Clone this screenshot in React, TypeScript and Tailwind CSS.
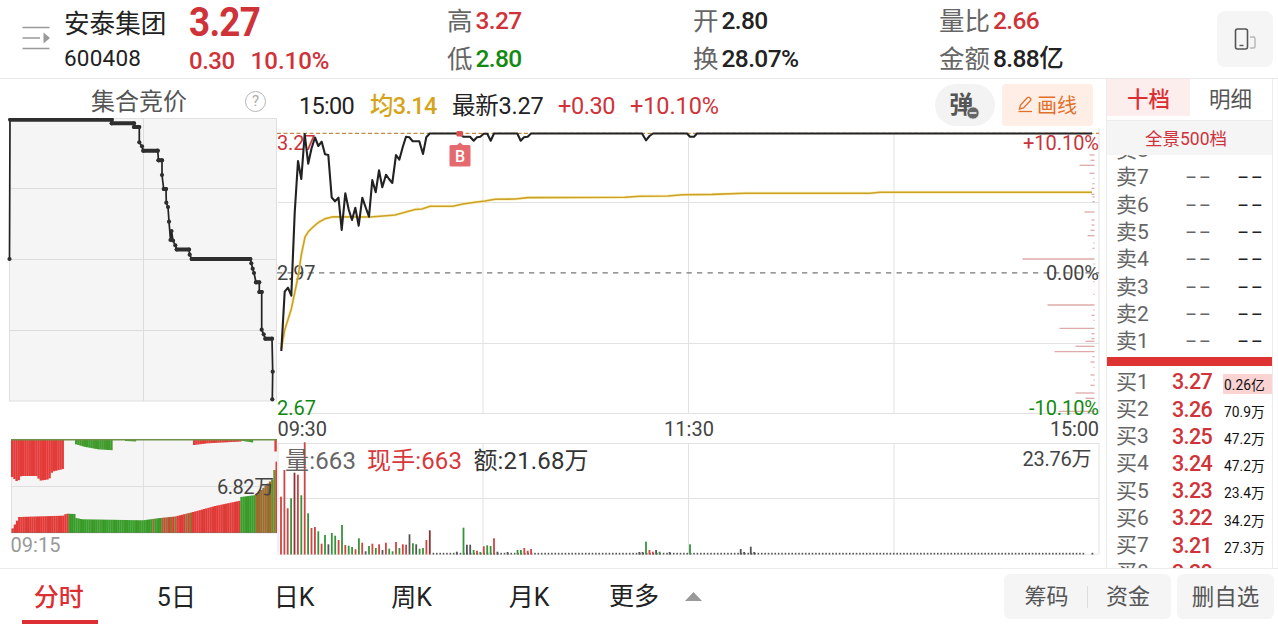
import React from 'react';
import clsx from 'clsx';

type Point = [number, number];

const GRID = '#e2e2e2';
const RED = '#e83a3a';
const GREEN = '#36a12b';

const toPath = (points: Point[]) => points.map((p) => p.join(',')).join(' ');

const interpolate = (points: Point[], x: number) => {
    for (let i = 1; i < points.length; i++) {
        const [x0, y0] = points[i - 1];
        const [x1, y1] = points[i];
        if (x <= x1) return y0 + ((y1 - y0) * (x - x0)) / (x1 - x0);
    }
    return points[points.length - 1][1];
};

const auctionLine: Point[] = [
    [9.5, 259], [10, 119.7], [111.7, 119.7], [111.7, 123.3], [134, 123.3], [134, 127], [139.3, 127], [139.3, 142.3],
    [142, 146.3], [143.3, 150.7], [157.7, 150.7], [158.5, 160.3], [162, 160.3], [162, 175], [163.7, 189], [166, 189],
    [166.3, 202.7], [168, 207], [169, 221.7], [170.5, 240], [171.5, 231], [173, 240.5], [175.3, 245.3], [176.7, 249.5],
    [189, 249.5], [189.7, 254.7], [191.7, 259], [250.3, 259], [251.3, 263.3], [252.7, 268.7], [254, 273], [256, 282.3],
    [259.3, 282.3], [259.3, 292], [261.7, 292], [261.7, 329.7], [263.7, 334.3], [265.3, 338.7], [272, 338.7],
    [272.7, 371.7], [272.3, 399.3],
];

// stretches where the quote stood still, drawn as a thick stroke
const auctionFlats = [
    [10, 111.7, 119.7], [111.7, 134, 123.3], [134, 139, 127], [143.3, 157.7, 150.7], [158.5, 162, 160.3], [164, 166, 189],
    [176.7, 189, 249.5], [191.7, 250.3, 259], [256, 259, 282.3], [259.5, 261.7, 292], [265.5, 272, 338.7],
];

const priceLine: Point[] = [
    [281.3, 351], [284.7, 291.7], [288, 287.7], [291.3, 295.7], [294.7, 213], [298, 161], [301.3, 179], [304.7, 134],
    [308.2, 163.7], [311.5, 148.5], [315, 137.5], [318.3, 146], [321.7, 141.7], [325, 154.3], [328.3, 155],
    [331.7, 197.5], [335, 201.3], [338.5, 197.7], [341.7, 230], [345.3, 193.3], [348.7, 209.5], [352, 220],
    [355.3, 207.7], [358.7, 225.7], [362.3, 197.7], [365.7, 207.5], [369, 216.7], [372.3, 180], [375.7, 192.3],
    [379, 170.3], [382.3, 187.3], [386, 174.7], [389, 179], [392.3, 183], [396, 155], [399.3, 159.7], [402.7, 147.3],
    [406, 136.7], [409.3, 137.3], [412.7, 141.3], [419.3, 141.3], [423, 154], [426.3, 137.3], [429.7, 133.5],
    [459.7, 133.5], [463.3, 136.7], [470, 136.7], [473.7, 140.7], [477, 137.3], [480.3, 136.7], [483.7, 133.8],
    [487.3, 133.8], [490.7, 140.7], [494, 133.5], [517.3, 133.5], [520.7, 140.7], [524, 137.3], [527.7, 136.7],
    [531, 133.5], [642, 133.5], [646, 140.3], [649.5, 136], [653, 133.5], [687, 133.5], [690, 136.7], [694, 136.7],
    [697, 133.5], [1092, 133.5],
];

const avgLine: Point[] = [
    [281.3, 349], [284.7, 330], [291.3, 309], [298, 277], [301.3, 255], [305, 237], [308.3, 231.7], [313, 227],
    [318.5, 222.3], [325, 218.7], [333, 216.7], [370, 217], [380, 216.3], [395, 215], [405, 212.3], [415, 209.5],
    [422, 209], [430, 206.3], [453, 206.3], [463, 204], [475, 202.3], [485, 201], [495, 199.3], [515, 199],
    [528, 197.6], [625, 197.2], [640, 196.2], [668, 196], [682, 194.7], [712, 194.4], [745, 193.3], [870, 193.2],
    [880, 192.3], [1092, 192.3],
];

// [x, top, colour] of the taller minutes; everything else is a dot on the base line
const volumeBars: [number, number, string][] = [
    [281, 496.7, 'r'], [284.4, 470, 'r'], [287.7, 508.3, 'r'], [291.1, 498.3, 'g'], [294.5, 472.7, 'd'],
    [297.9, 474.7, 'r'], [301.3, 495.3, 'g'], [304.7, 442.3, 'r'], [308.1, 513.3, 'g'], [311.5, 528, 'r'],
    [314.9, 527, 'r'], [318.3, 531.3, 'g'], [321.6, 543.7, 'r'], [325, 535, 'g'], [328.4, 544.3, 'k'],
    [331.8, 533, 'g'], [335.2, 535.7, 'g'], [338.6, 540, 'r'], [342, 525, 'g'], [345.3, 545, 'r'],
    [348.7, 545.7, 'g'], [352.1, 547, 'g'], [355.5, 549.3, 'r'], [358.9, 538.3, 'g'], [362.2, 542.7, 'r'],
    [365.6, 551.3, 'k'], [369, 546, 'g'], [372.4, 543.7, 'r'], [375.8, 548, 'g'], [379.1, 544.3, 'r'],
    [382.5, 550, 'k'], [385.9, 542.7, 'r'], [389.2, 548.7, 'g'], [392.6, 551.3, 'g'], [396, 542, 'r'],
    [399.4, 548, 'g'], [402.8, 544.3, 'r'], [406.1, 544.7, 'r'], [409.5, 534.3, 'k'], [412.9, 543.3, 'g'],
    [416.2, 544.3, 'k'], [419.6, 548.7, 'g'], [423, 548, 'g'], [426.4, 540, 'r'], [429.8, 530.3, 'd'],
    [456.8, 551.7, 'k'], [463.5, 527.7, 'g'], [466.9, 544.7, 'k'], [470.2, 544.7, 'k'], [473.6, 550, 'g'],
    [477, 550.7, 'r'], [480.3, 552, 'g'], [483.8, 546.3, 'r'], [487.2, 545.3, 'g'], [490.6, 546, 'g'],
    [494, 538.3, 'r'], [497.4, 551.7, 'k'], [507.5, 552, 'k'], [517.5, 550, 'g'], [520.9, 550, 'g'],
    [524.3, 548, 'r'], [527.7, 550.7, 'r'], [531.1, 549, 'r'], [639.3, 552, 'k'], [642.6, 552, 'k'], [646, 541.7, 'g'],
    [649.4, 550, 'r'], [652.8, 551.7, 'r'], [656.1, 550, 'k'], [659.5, 551.7, 'g'], [669.6, 552, 'k'], [690, 544.3, 'g'],
    [740.7, 549, 'k'], [744.1, 552, 'k'], [750.8, 546.7, 'k'], [754.2, 552, 'k'],
];

const barColors: Record<string, string> = { r: '#cf4444', g: '#36953a', d: '#8a3434', k: '#555555' };

const priceProfile: Point[] = [
    [155, 5], [160.3, 4], [165.3, 15], [173.3, 5], [178.3, 1], [183.7, 2], [188.3, 3], [194.3, 3], [197, 2], [201.7, 2],
    [212, 10], [220, 3], [225, 3], [230.3, 4], [235.7, 7], [243, 1], [248.3, 2], [259, 72], [264, 1], [281.7, 1],
    [294.3, 1], [305, 47], [310, 1], [315.3, 3], [320.3, 1], [328.3, 35], [333.7, 3], [338.7, 3], [341.3, 9],
    [346.3, 19], [351.7, 40], [356.7, 2], [362, 4], [367.3, 1], [375, 4], [380, 1], [385.3, 4], [393, 19], [398.3, 9],
    [411.3, 36],
];

const matchedTop: Point[] = [
    [11, 531], [19, 517], [63, 515.7], [66, 513.7], [75, 514], [76, 518], [82, 519.3], [143, 520.3], [160, 518],
    [175, 516.5], [193, 512], [215, 506], [240, 500.7], [241, 497], [256, 495], [262, 489], [272, 479.5], [274, 479],
    [274.5, 464], [277, 461],
];

const matchedColor = (x: number, i: number) => {
    if (x < 67) return RED;
    if (x < 146) return GREEN;
    if (x < 160) return i % 4 === 0 ? '#987134' : GREEN;
    if (x < 176) return i % 2 ? RED : '#8a7a30';
    if (x < 184) return RED;
    if (x < 191) return i % 2 ? '#8a7a30' : RED;
    if (x < 240) return RED;
    if (x < 255) return GREEN;
    if (x < 271) return i % 2 ? '#b3632f' : '#877a30';
    return x < 274 ? '#69932c' : RED;
};

const unmatched: { color: string; points: Point[] }[] = [
    { color: RED, points: [[11, 477], [16.5, 482], [20, 476], [36, 476], [38.5, 480.7], [48, 479.3], [51, 471.7], [63, 468.7]] },
    { color: GREEN, points: [[75, 444.3], [83, 446.7], [97, 449.3], [112.5, 450.3]] },
    { color: GREEN, points: [[125, 441], [136, 441.5]] },
    { color: RED, points: [[193, 445], [206, 443.3], [240, 441.5]] },
    { color: GREEN, points: [[242, 441], [253, 442.7]] },
    { color: RED, points: [[274.4, 451.5], [276.6, 451.5]] },
];

const steps = (from: number, to: number, step: number) => {
    const out: number[] = [];
    for (let x = from; x < to - 0.5; x += step) out.push(x);
    return out;
};

const AuctionChart = () => (
    <svg className="block h-[440px] w-[277px]" viewBox="0 118 277 440">
        <rect x="9.5" y="118.5" width="267" height="282.5" fill="#f5f5f5" stroke="#dfdfdf" />
        <path d="M9 188.5H277M9 259.5H277M9 330.5H277M143.5 118V401" stroke="#dcdcdc" fill="none" />
        <polyline points={toPath(auctionLine)} fill="none" stroke="#222" strokeWidth="1.7" />
        {auctionFlats.map(([a, b, y], i) => (
            <path key={i} d={`M${a} ${y}H${b}`} stroke="#2e2e2e" strokeWidth="4" strokeLinecap="round" />
        ))}
        {auctionLine.map(([x, y], i) => i !== 1 && <circle key={i} cx={x} cy={y} r="2.1" fill="#2e2e2e" />)}

        <rect x="11" y="439.5" width="266" height="93" fill="#f5f5f5" />
        <path d="M11 486.5H277M143.5 439V533M11.5 439V533" stroke="#dfdfdf" fill="none" />
        {unmatched.map(({ color, points }, n) =>
            steps(points[0][0], points[points.length - 1][0], 2.2).map((x) => (
                <React.Fragment key={n + '-' + x}>
                    <rect x={x} y="440" width="2.3" height={interpolate(points, x) - 440} fill={color} />
                    <rect x={x + 1.8} y="440" width="0.5" height={interpolate(points, x) - 440} fill="#b2502f" opacity="0.5" />
                </React.Fragment>
            ))
        )}
        {steps(11.5, 277, 2.2).map((x, i) => {
            const top = interpolate(matchedTop, x + 1);
            return (
                <React.Fragment key={x}>
                    <rect x={x} y={top} width="2.3" height={533 - top} fill={matchedColor(x, i)} />
                    <rect x={x + 1.8} y={top} width="0.5" height={533 - top} fill="#775a20" opacity="0.4" />
                </React.Fragment>
            );
        })}
        <path d="M11 439.7H277" stroke="#6e9147" strokeWidth="1.4" />
        <path d="M11 532.7H277" stroke="#777" strokeWidth="0.7" opacity="0.6" />
        <text x="217" y="493.5" fontSize="20" textLength="57" fill="#444">6.82万</text>
        <text x="10.5" y="551.5" fontSize="20" textLength="50" fill="#999">09:15</text>
    </svg>
);

const PriceChart = () => (
    <svg className="block h-[430px] w-[830px]" viewBox="277 128 830 430">
        <path d="M278 202.5H1099M278 343.5H1099M278 413.5H1099M278 443.5H1099M278 498.5H1099" stroke={GRID} fill="none" />
        <path d="M483 134V413M483 443V554M688.5 134V413M688.5 443V554M894 134V413M894 443V554M1099 128V413M1099 443V554M278 443V554" stroke={GRID} fill="none" />
        <path d="M278 554.5H1099" stroke="#ededed" />
        <path d="M277 133.3H1099" stroke="#c58a45" strokeWidth="1.3" strokeDasharray="4 2.5" />
        <path d="M277 272.8H1099" stroke="#777" strokeWidth="1.3" strokeDasharray="5.3 5.2" />
        {priceProfile.map(([y, len]) => (
            <path key={y} d={`M${1094.5 - len} ${y}H1094.5`} stroke="#dfaaaa" strokeWidth="1.3" />
        ))}
        <g fontSize="20">
            <text x="277" y="150" textLength="38.5" fill="#c9333c">3.27</text>
            <text x="277" y="280" textLength="38.5" fill="#444">2.97</text>
            <text x="277" y="415.3" textLength="39" fill="#128a12">2.67</text>
            <text x="1023" y="150" textLength="76" fill="#c9333c">+10.10%</text>
            <text x="1046" y="280" textLength="53" fill="#444">0.00%</text>
            <text x="1029" y="415.3" textLength="70" fill="#128a12">-10.10%</text>
            <text x="277.5" y="436" textLength="49.5" fill="#444">09:30</text>
            <text x="664" y="436" textLength="50" fill="#444">11:30</text>
            <text x="1050" y="436" textLength="49" fill="#444">15:00</text>
            <text x="1022.5" y="465.5" textLength="69" fill="#444">23.76万</text>
        </g>
        <polyline points={toPath(avgLine)} fill="none" stroke="#fbe27c" strokeWidth="3" opacity="0.5" />
        <polyline points={toPath(avgLine)} fill="none" stroke="#cba228" strokeWidth="1.6" />
        <polyline points={toPath(priceLine)} fill="none" stroke="#222" strokeWidth="2.1" strokeLinejoin="round" />

        <rect x="456.3" y="131" width="6.8" height="5.5" rx="1.5" fill="#d9534f" />
        <path d="M451 145H457L460 142.5L463 145H469Q470.5 145 470.5 146.5V165Q470.5 166.5 469 166.5H451Q449.5 166.5 449.5 165V146.5Q449.5 145 451 145Z" fill="#e56a70" />
        <text x="460" y="161.5" fontSize="16" fontWeight="500" textAnchor="middle" fill="#fff">B</text>

        {steps(432.6, 1084, 3.385).map((x) => (
            <rect key={x} x={x} y="552.8" width="1.6" height="1.7" fill="#555" />
        ))}
        <rect x="1091.5" y="552.8" width="1.8" height="1.7" fill="#555" />
        {volumeBars.map(([x, y, c]) => (
            <rect key={x} x={x - 0.9} y={y} width="1.8" height={554.5 - y} fill={barColors[c]} />
        ))}
        <g fontSize="24">
            <text x="285" y="469" textLength="71" fill="#666">量:663</text>
            <text x="367" y="469" textLength="95" fill="#d8373b">现手:663</text>
            <text x="473.5" y="469" textLength="115" fill="#333">额:21.68万</text>
        </g>
    </svg>
);

interface StatProps {
    label: string;
    value: string;
    tone?: string;
}

const Stat = ({ label, value, tone = 'text-[#222]' }: StatProps) => (
    <div className="flex h-[38px] items-center text-[25.5px] whitespace-nowrap">
        <span className="text-[#666]">{label}</span>
        <span className={clsx('ml-[3px] text-[24.5px] font-medium tracking-[-0.6px]', tone)}>{value}</span>
    </div>
);

const Header = () => (
    <header className="flex h-[79px] shrink-0 border-b border-[#e9e9e9]">
        <div className="w-[64px] shrink-0 pt-[26px] pl-[22px]">
            <svg className="h-[24px] w-[28px]" viewBox="0 0 28 24">
                <path d="M0.5 1.5H27.5M0.5 12H18M0.5 22.5H27.5" stroke="#999" strokeWidth="1.6" />
                <path d="M21.5 6.5L28 12L21.5 17.5Z" fill="#999" />
            </svg>
        </div>
        <div className="w-[125px] shrink-0 text-[#222]">
            <div className="mt-[6px] h-[36px] text-[25.6px] leading-[37px]">安泰集团</div>
            <div className="text-[22.5px] leading-[32px] tracking-[0.2px]">600408</div>
        </div>
        <div className="w-[258px] shrink-0 text-[#cf3339]">
            <div className="h-[45px] w-[90px] origin-left scale-x-[0.92] text-[40px] leading-[45px] font-bold tracking-[-0.8px]">3.27</div>
            <div className="flex gap-[16px] text-[24px] leading-[32px] font-medium tracking-[-0.5px]">
                <span>0.30</span>
                <span className="tracking-normal">10.10%</span>
            </div>
        </div>
        <div className="grid h-[78px] w-[738px] shrink-0 grid-cols-3 content-start pt-[2px]">
            <Stat label="高" value="3.27" tone="text-[#cf3339]" />
            <Stat label="开" value="2.80" />
            <Stat label="量比" value="2.66" tone="text-[#cf3339]" />
            <Stat label="低" value="2.80" tone="text-[#128a12]" />
            <Stat label="换" value="28.07%" />
            <Stat label="金额" value="8.88亿" />
        </div>
        <div className="mt-[11px] ml-[32px] flex h-[56px] w-[56px] shrink-0 items-center justify-center rounded-lg bg-[#f5f5f5]">
            <svg className="h-[22px] w-[22px]" viewBox="0 0 22 22" fill="none">
                <rect x="1.5" y="1" width="12" height="20" rx="2" stroke="#555" strokeWidth="1.6" />
                <path d="M5.5 17.5H9.5" stroke="#555" strokeWidth="1.4" />
                <path d="M16 9H19.5Q21 9 21 10.5V18.5Q21 20 19.5 20H16" stroke="#b5b5b5" strokeWidth="1.4" />
            </svg>
        </div>
    </header>
);

const ChartToolbar = () => (
    <div className="flex h-[49px] items-center pl-[22px] text-[23.5px] tracking-[-0.4px] whitespace-nowrap text-[#222]">
        <span className="w-[71px] pt-[6px] tracking-[-0.7px]">15:00</span>
        <span className="w-[82px] pt-[6px] font-medium tracking-[-0.7px] text-[#d6a419]">均3.14</span>
        <span className="w-[106px] pt-[6px] tracking-[-0.2px]">最新3.27</span>
        <span className="w-[72px] pt-[6px] text-[#cf3339]">+0.30</span>
        <span className="w-[305px] pt-[6px] tracking-[-0.1px] text-[#cf3339]">+10.10%</span>
        <button className="relative mt-[2px] h-[42px] w-[60px] rounded-full bg-[#f3f3f3] pr-[8px] text-[24px] leading-[40px] font-bold text-[#555]">
            弹
            <svg className="absolute top-[22px] left-[31px] h-[14px] w-[14px]" viewBox="0 0 14 14">
                <circle cx="7" cy="7" r="6.2" fill="#666" stroke="#f3f3f3" />
                <path d="M3.5 7H10.5" stroke="#fff" strokeWidth="1.5" />
            </svg>
        </button>
        <button className="mt-[2px] ml-[7px] flex h-[42px] w-[91px] items-center justify-center gap-[4px] rounded-[4px] bg-[#ffeee6] text-[20px] leading-[44px] tracking-normal text-[#e0702c]">
            <svg className="h-[17px] w-[15px]" viewBox="0 0 15 17" fill="none" stroke="#e0702c" strokeWidth="1.3">
                <path d="M1.5 13L2.5 9L9.5 1.5Q10.5 0.7 11.5 1.5L12.5 2.5Q13.5 3.5 12.5 4.5L5.5 12Z" />
                <path d="M0.5 15.5H14" />
            </svg>
            <span className="pt-[2px]">画线</span>
        </button>
    </div>
);

const sellLevels = [8, 7, 6, 5, 4, 3, 2, 1];

const buyLevels = [
    { level: 1, price: '3.27', amount: '0.26亿' },
    { level: 2, price: '3.26', amount: '70.9万' },
    { level: 3, price: '3.25', amount: '47.2万' },
    { level: 4, price: '3.24', amount: '47.2万' },
    { level: 5, price: '3.23', amount: '23.4万' },
    { level: 6, price: '3.22', amount: '34.2万' },
    { level: 7, price: '3.21', amount: '27.3万' },
    { level: 8, price: '3.20', amount: '' },
];

const OrderBook = () => (
    <aside className="-ml-px flex h-[489px] w-[167px] shrink-0 flex-col border-x border-[#ececec]">
        <div className="flex h-[42px] shrink-0 border-b border-[#ececec] text-[21.5px]">
            <div className="h-[37px] w-[83px] bg-[#fdeeee] text-center leading-[41px] font-medium text-[#dd2f33]">十档</div>
            <div className="flex-1 pr-px text-center leading-[42px] text-[#555]">明细</div>
        </div>
        <div className="h-[34px] shrink-0 bg-[#f5f5f5] pr-[7px] text-center text-[17.5px] leading-[37px] text-[#cf3339]">全景500档</div>
        <div className="flex h-[202px] shrink-0 flex-col justify-end overflow-hidden pb-[1.5px]">
            {sellLevels.map((level) => (
                <div key={level} className="flex h-[27.3px] shrink-0 items-center pl-[9px] text-[21px]">
                    <span className="w-[70px] text-[#666]">卖{level}</span>
                    <span className="w-[52px] origin-left scale-x-[1.75] pb-[2px] tracking-[2px] text-[#666]">--</span>
                    <span className="origin-left scale-x-[1.75] pb-[2px] tracking-[2px] text-[#222]">--</span>
                </div>
            ))}
        </div>
        <div className="h-[9px] shrink-0 bg-[#dd3333]" />
        <div className="flex-1 overflow-hidden pt-[3px]">
            {buyLevels.map(({ level, price, amount }) => (
                <div key={level} className="flex h-[27.2px] items-center pl-[9px] text-[21px]">
                    <span className="w-[56px] text-[#666]">买{level}</span>
                    <span className="w-[51px] text-[21.5px] font-medium tracking-[-0.6px] text-[#cf3339]">{price}</span>
                    <span className={clsx('mt-[2px] h-[20px] flex-1 pl-[1px] text-[13.8px] leading-[22px] whitespace-nowrap text-[#111]', level === 1 && 'bg-[#fbd3d3]')}>
                        {amount}
                    </span>
                </div>
            ))}
        </div>
    </aside>
);

const tabs = ['分时', '5日', '日K', '周K', '月K'];

const BottomBar = () => (
    <footer className="flex h-[56px] shrink-0 border-t border-[#ececec] text-[25px] text-[#222]">
        <nav className="flex w-[1004px] leading-[58px]">
            {tabs.map((tab, i) => (
                <div key={tab} className={clsx('relative w-[117.6px] text-center', i === 0 && 'font-medium text-[#dd2f33]')}>
                    {tab}
                    {i === 0 && <span className="absolute bottom-0 left-[22px] h-[4px] w-[76px] bg-[#dd2f33]" />}
                </div>
            ))}
            <div className="ml-[21px] flex items-center gap-[26px]">
                更多
                <svg className="h-[9px] w-[17px]" viewBox="0 0 17 9">
                    <path d="M0 9L8.5 0L17 9Z" fill="#999" />
                </svg>
            </div>
        </nav>
        <div className="mt-[5px] flex h-[45px] w-[167px] items-center rounded-md bg-[#f5f5f5] text-center text-[22px] leading-[46px] text-[#555]">
            <span className="w-[83px] pl-[2px]">筹码</span>
            <span className="h-[22px] w-px bg-[#ddd]" />
            <span className="w-[80px]">资金</span>
        </div>
        <div className="mt-[5px] ml-[6px] h-[45px] w-[97px] rounded-md bg-[#f5f5f5] text-center text-[22.5px] leading-[47px] text-[#555]">删自选</div>
    </footer>
);

const App = () => {
    return (
        <div className="flex h-[624px] w-[1278px] flex-col overflow-hidden bg-white font-['Roboto','Noto_Sans_CJK_SC',sans-serif]">
            <Header />
            <main className="flex h-[489px] shrink-0">
                <section className="w-[277px] shrink-0">
                    <div className="flex h-[39px] items-center pt-[6px] pl-[91px] text-[24px] text-[#555]">
                        <span className="w-[154px] pt-[1px]">集合竞价</span>
                        <span className="flex h-[21px] w-[21px] items-center justify-center rounded-full border-[1.5px] border-[#b5b5b5] text-[15px] text-[#aaa]">?</span>
                    </div>
                    <AuctionChart />
                </section>
                <section className="w-[830px] shrink-0">
                    <ChartToolbar />
                    <PriceChart />
                </section>
                <OrderBook />
            </main>
            <BottomBar />
        </div>
    );
};

export default App;
